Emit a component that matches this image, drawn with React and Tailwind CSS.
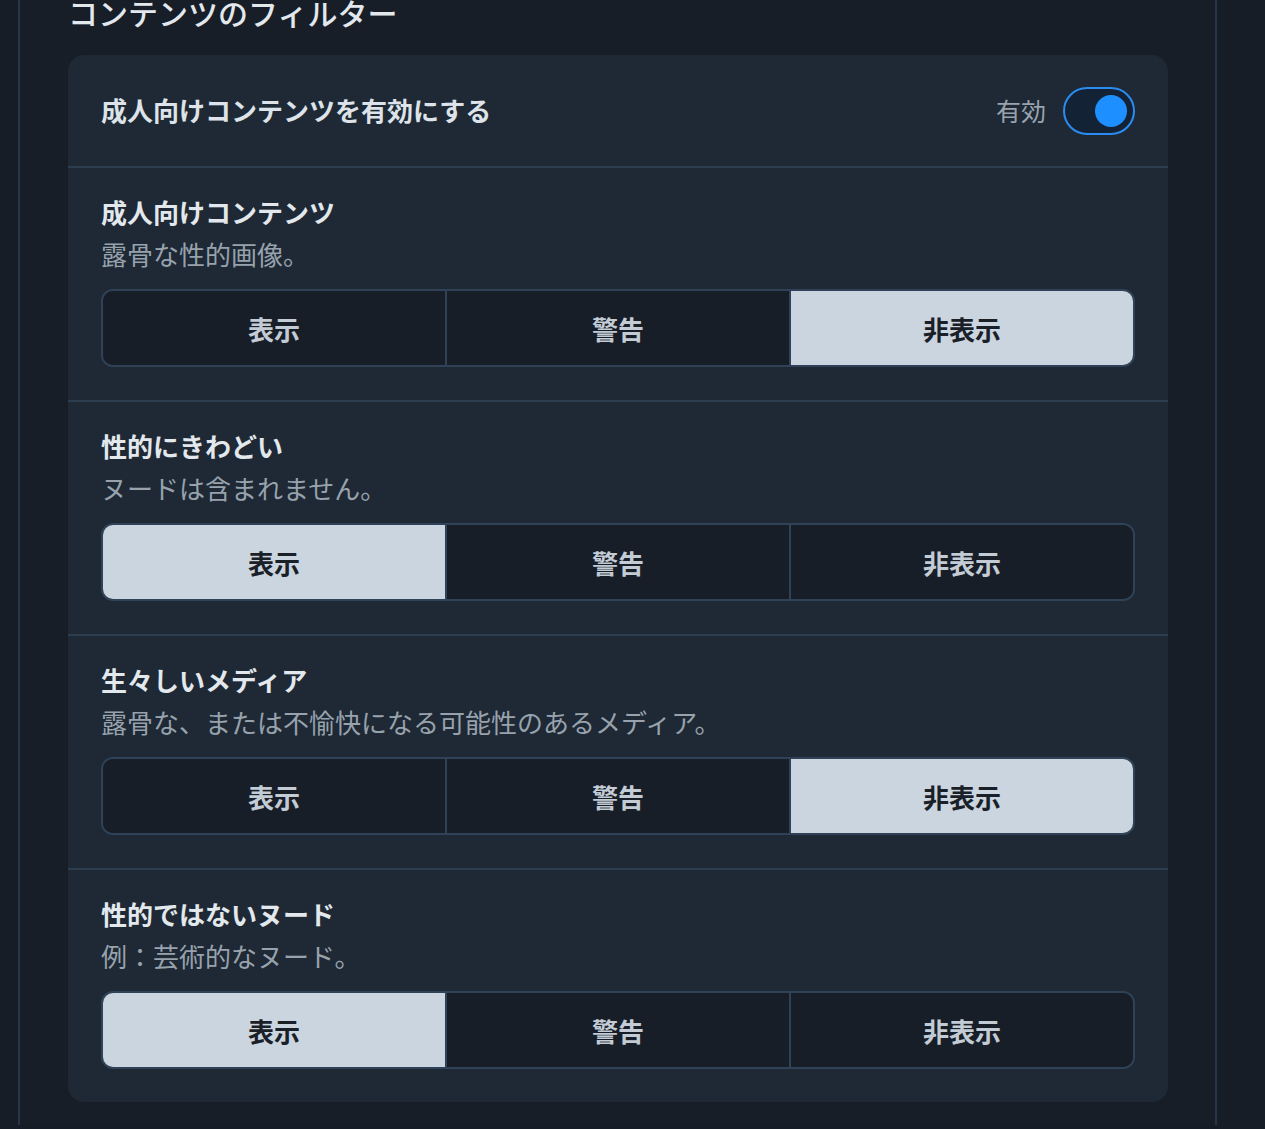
import React, { useState } from 'react';

const sections = [
    { title: '成人向けコンテンツ', desc: '露骨な性的画像。', value: 2 },
    { title: '性的にきわどい', desc: 'ヌードは含まれません。', value: 0 },
    { title: '生々しいメディア', desc: '露骨な、または不愉快になる可能性のあるメディア。', value: 2 },
    { title: '性的ではないヌード', desc: '例：芸術的なヌード。', value: 0 },
];

const options = ['表示', '警告', '非表示'];

const Segmented = ({ value, onChange }) => (
    <div className="mt-[15px] flex h-[78px] overflow-hidden rounded-[12px] border-2 border-[#2f4257]">
        {options.map((opt, i) => (
            <button
                key={opt}
                onClick={() => onChange(i)}
                className={
                    'flex-1 text-[26px] font-bold ' +
                    (i > 0 ? 'border-l-2 border-[#2f4257] ' : '') +
                    (value === i ? 'bg-[#cbd5df] text-[#1a2028]' : 'bg-[#171e27] text-[#c3ccd5]')
                }
            >
                {opt}
            </button>
        ))}
    </div>
);

const App = () => {
    const [enabled, setEnabled] = useState(true);
    const [values, setValues] = useState(sections.map((s) => s.value));

    return (
        <div
            className="min-h-[1129px] w-full bg-[#161d26] overflow-hidden"
            style={{ fontFamily: '"Noto Sans CJK JP", "Noto Sans", sans-serif' }}
        >
            <div className="ml-[18px] w-[1199px] min-h-[1129px] border-x-2 border-[#26354a] bg-[#171e27] pl-[48px] pr-[47px]">
                <h2 className="-mt-[4px] h-[32px] text-[30px] leading-[32px] font-medium text-[#e3e8ed]">
                    コンテンツのフィルター
                </h2>
                <div className="mt-[27px] rounded-[16px] bg-[#1e2935]">
                    <div className="flex h-[113px] items-center justify-between border-b-2 border-[#2c3d50] px-[33px]">
                        <span className="-mt-[2px] text-[26px] font-bold text-[#dde3e9]">成人向けコンテンツを有効にする</span>
                        <div className="flex items-center gap-[17px]">
                            <span className="text-[25px] text-[#98a3ae]">有効</span>
                            <button
                                onClick={() => setEnabled(!enabled)}
                                className={
                                    'flex h-[48px] w-[72px] items-center rounded-full border-2 px-[6px] ' +
                                    (enabled ? 'justify-end border-[#2a8cf0] bg-[#142236]' : 'justify-start border-[#3a4b5e] bg-[#171e27]')
                                }
                            >
                                <span className={'h-[32px] w-[32px] rounded-full ' + (enabled ? 'bg-[#1e8fff]' : 'bg-[#6b7785]')} />
                            </button>
                        </div>
                    </div>
                    {sections.map((s, idx) => (
                        <div
                            key={s.title}
                            className={'px-[33px] pt-[28px] pb-[33px] ' + (idx < sections.length - 1 ? 'border-b-2 border-[#2c3d50]' : '')}
                        >
                            <div className="text-[26px] leading-[32px] font-bold text-[#e3e8ed]">{s.title}</div>
                            <div className="mt-[6px] text-[26px] leading-[40px] text-[#97a2ad]">{s.desc}</div>
                            <Segmented
                                value={values[idx]}
                                onChange={(v) => setValues(values.map((x, j) => (j === idx ? v : x)))}
                            />
                        </div>
                    ))}
                </div>
            </div>
        </div>
    );
};

export default App;
